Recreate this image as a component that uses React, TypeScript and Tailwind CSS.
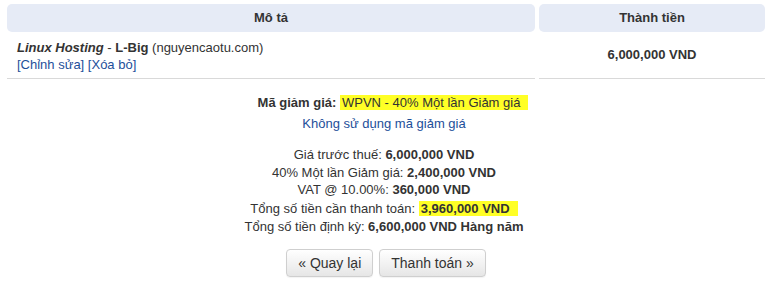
import React from 'react';

const summary = [
  { label: 'Giá trước thuế:', value: '6,000,000 VND' },
  { label: '40% Một lần Giảm giá:', value: '2,400,000 VND' },
  { label: 'VAT @ 10.00%:', value: '360,000 VND' },
];

const App: React.FC = () => {
  return (
    <div className="w-[768px] h-[288px] bg-white text-[13px] text-[#333] font-['Liberation_Sans',Arial,sans-serif] overflow-hidden">
      {/* Cart table */}
      <div className="pt-[4px] px-[7px] pr-[3px]">
        <div className="flex gap-[4px]">
          <div className="w-[528px] h-[28px] rounded-[5px] bg-[#e6ebf6] flex items-center justify-center font-bold">
            Mô tả
          </div>
          <div className="flex-1 h-[28px] rounded-[5px] bg-[#e6ebf6] flex items-center justify-center font-bold">
            Thành tiền
          </div>
        </div>
        <div className="flex gap-[4px]">
          <div className="w-[528px] h-[47px] border-b border-[#d9d9d9] pl-[10px] pt-[7px] leading-[17px]">
            <div>
              <span className="italic font-bold">Linux Hosting</span> - <span className="font-bold">L-Big</span>{' '}
              (nguyencaotu.com)
            </div>
            <div className="text-[#1d4f9a]">
              <a>[Chỉnh sửa]</a> <a>[Xóa bỏ]</a>
            </div>
          </div>
          <div className="flex-1 h-[47px] border-b border-[#d9d9d9] flex items-center justify-center font-bold">
            6,000,000 VND
          </div>
        </div>
      </div>

      {/* Promo + totals */}
      <div className="flex flex-col items-center mt-[15px] leading-[18px]">
        <div className="pl-[18px]">
          <span className="font-bold">Mã giảm giá:</span>{' '}
          <span className="bg-[#ffff26] px-[2px] pr-[8px]">WPVN - 40% Một lần Giảm giá</span>
        </div>
        <div className="text-[#1d4f9a] mt-[3px]">Không sử dụng mã giảm giá</div>

        <div className="mt-[13px] flex flex-col items-center leading-[17.5px]">
          {summary.map((row) => (
            <div key={row.label}>
              {row.label} <span className="font-bold">{row.value}</span>
            </div>
          ))}
          <div className="mt-[1px]">
            Tổng số tiền cần thanh toán:{' '}
            <span className="font-bold bg-[#ffff26] pl-[2px] pr-[8px]">3,960,000 VND</span>
          </div>
          <div className="mt-[1px]">
            Tổng số tiền định kỳ: <span className="font-bold">6,600,000 VND Hàng năm</span>
          </div>
        </div>

        <div className="flex gap-[6px] mt-[13px] pl-[4px] text-[14px]">
          <button className="h-[28px] px-[11px] rounded-[4px] border border-[#cfcfcf] bg-gradient-to-b from-white to-[#e6e6e6] text-[#333] shadow-[0_1px_1px_rgba(0,0,0,0.05)]">
            « Quay lại
          </button>
          <button className="h-[28px] px-[11px] rounded-[4px] border border-[#cfcfcf] bg-gradient-to-b from-white to-[#e6e6e6] text-[#333] shadow-[0_1px_1px_rgba(0,0,0,0.05)]">
            Thanh toán »
          </button>
        </div>
      </div>
    </div>
  );
};

export default App;
